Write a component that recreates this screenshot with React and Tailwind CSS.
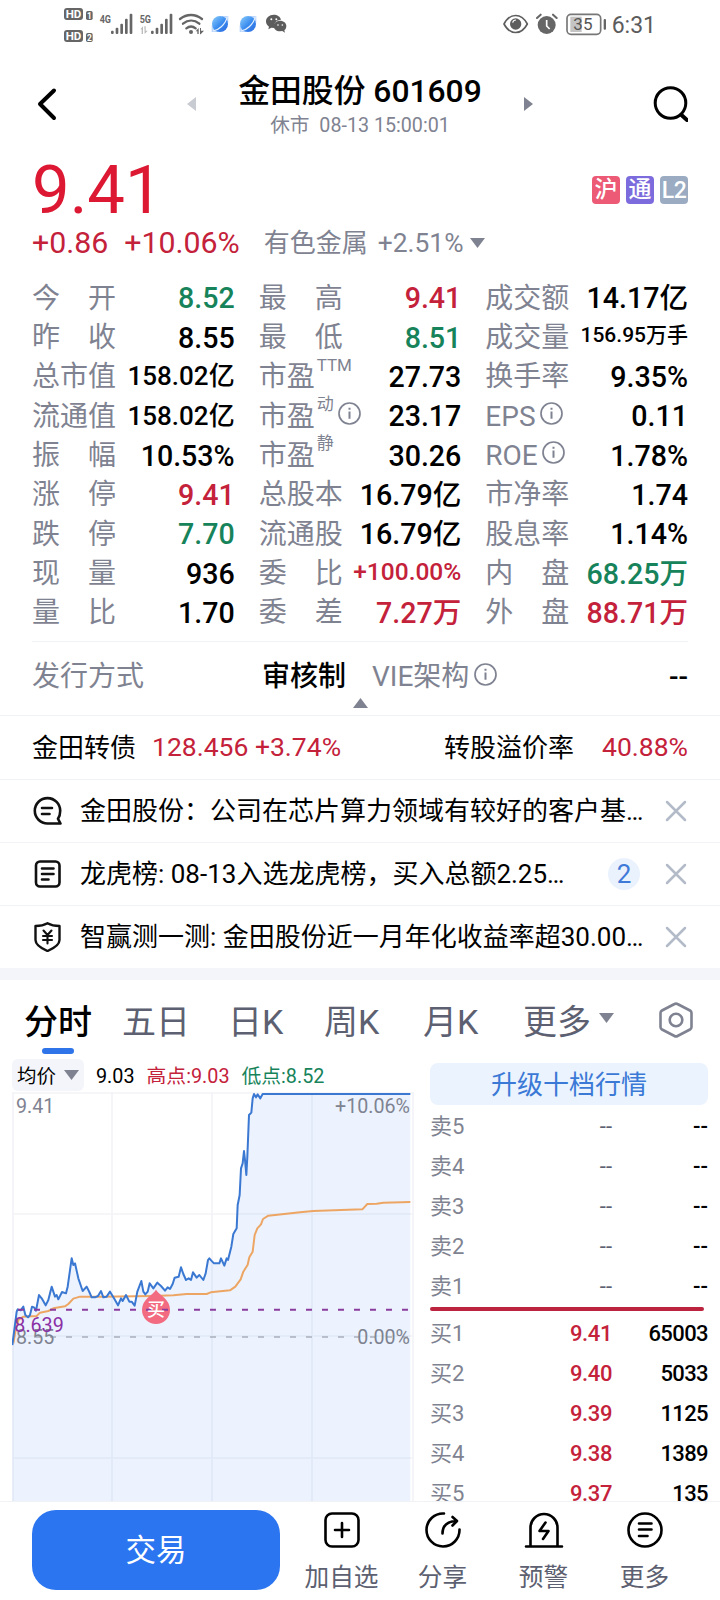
import React, { useState } from 'react';

const RED = 'text-[#c4213a]';
const GREEN = 'text-[#17835a]';

// STATS TABLE //
const STATS = [
  { label: '今开', value: '8.52', color: GREEN },
  { label: '最高', value: '9.41', color: RED },
  { label: '成交额', value: '14.17亿' },
  { label: '昨收', value: '8.55' },
  { label: '最低', value: '8.51', color: GREEN },
  { label: '成交量', value: '156.95万手', size: 'text-[21px] pb-1' },
  { label: '总市值', value: '158.02亿', size: 'text-[26px] pb-0.5' },
  { label: '市盈', sup: 'TTM', value: '27.73' },
  { label: '换手率', value: '9.35%' },
  { label: '流通值', value: '158.02亿', size: 'text-[26px] pb-0.5' },
  { label: '市盈', sup: '动', info: true, value: '23.17' },
  { label: 'EPS', info: true, value: '0.11' },
  { label: '振幅', value: '10.53%' },
  { label: '市盈', sup: '静', value: '30.26' },
  { label: 'ROE', info: true, value: '1.78%' },
  { label: '涨停', value: '9.41', color: RED },
  { label: '总股本', value: '16.79亿' },
  { label: '市净率', value: '1.74' },
  { label: '跌停', value: '7.70', color: GREEN },
  { label: '流通股', value: '16.79亿' },
  { label: '股息率', value: '1.14%' },
  { label: '现量', value: '936' },
  { label: '委比', value: '+100.00%', color: RED, size: 'text-[24.5px] pb-1' },
  { label: '内盘', value: '68.25万', color: GREEN },
  { label: '量比', value: '1.70' },
  { label: '委差', value: '7.27万', color: RED },
  { label: '外盘', value: '88.71万', color: RED },
];

// ORDER BOOK //
const ASKS = ['卖5', '卖4', '卖3', '卖2', '卖1'];
const BIDS = [
  { label: '买1', price: '9.41', volume: '65003' },
  { label: '买2', price: '9.40', volume: '5033' },
  { label: '买3', price: '9.39', volume: '1125' },
  { label: '买4', price: '9.38', volume: '1389' },
  { label: '买5', price: '9.37', volume: '135' },
];

// CHART LINES //
const PRICE_LINE =
  '37,375 50,275 53,268 62,271 70,260 76,285 84,292 90,285 96,260 102,262 108,272 117,225 125,235 137,256 145,240 155,200 165,230 170,225 175,238 186,216 198,220 203,200 215,115 220,135 225,130 235,175 248,213 260,200 268,216 275,232 285,232 294,228 303,213 310,232 320,230 330,215 342,235 354,256 363,235 368,243 378,225 388,245 395,245 404,257 412,215 424,183 430,215 436,223 443,215 449,190 460,205 472,188 483,198 495,212 503,202 510,207 518,192 524,173 536,170 543,142 550,162 558,180 566,175 573,180 579,157 590,173 598,165 610,180 617,160 624,120 628,115 634,122 642,130 658,130 663,115 673,137 680,115 684,120 694,80 700,42 710,25 713,-45 719,-75 723,-155 728,-170 732,-207 735,-180 739,-135 742,-190 747,-315 754,-322 758,-365 762,-378 768,-368 773,-377 781,-365 788,-378 1231,-378';
const AVG_LINE =
  '40,370 47,330 55,300 70,290 110,288 120,278 145,273 160,265 195,259 205,252 220,236 240,230 300,230 460,228 520,226 560,222 620,222 632,217 690,211 706,200 722,178 730,155 743,134 748,112 758,95 764,45 772,25 783,13 789,-3 805,-13 900,-23 940,-27 1087,-32 1102,-48 1130,-49 1150,-52 1231,-54';

function Info({ className = '' }) {
  return (
    <svg className={`h-[23px] w-[23px] shrink-0 ${className}`} viewBox="0 0 23 23" fill="none" stroke="#7f8391" strokeWidth="1.7">
      <circle cx="11.5" cy="11.5" r="10.5" />
      <path d="M11.5 9.6v7.2M11.5 5.8v2" strokeWidth="2" />
    </svg>
  );
}

function Signal({ label, arrows }) {
  return (
    <svg className="h-10 w-10" viewBox="144 15 120 120" fill="#666">
      <text x="149" y="68" fontSize="34" fontWeight="700" textLength="34" lengthAdjust="spacingAndGlyphs">{label}</text>
      {arrows && <path d="M151 88l8-9v23h-4v-14zM163 79h4v13h6l-9 10z" fill="#bbb" />}
      <rect x="183" y="92" width="8" height="10" rx="3" />
      <rect x="197" y="83" width="8" height="19" rx="3" />
      <rect x="211" y="71" width="8" height="31" rx="3" />
      <rect x="225" y="56" width="8" height="46" rx="3" />
      <rect x="239" y="41" width="8" height="61" rx="3" />
    </svg>
  );
}

function Globe() {
  return (
    <svg className="h-10 w-7" viewBox="477 15 84 120">
      <defs>
        <linearGradient id="globe" x1="0" y1="0" x2="1" y2="1">
          <stop offset="0" stopColor="#8fd0fb" />
          <stop offset="0.5" stopColor="#3d8ef0" />
          <stop offset="1" stopColor="#2a68e0" />
        </linearGradient>
      </defs>
      <path d="M514 48h21v20zM485 75v21h22z" fill="#bcd6fb" />
      <circle cx="510" cy="72" r="24" fill="url(#globe)" />
      <path d="M489 93c16-2 38-20 43-43" fill="none" stroke="#e4f1fe" strokeWidth="3.5" />
    </svg>
  );
}

function StatusBar() {
  return (
    <div className="flex h-[48px] items-start pt-[5px]">
      <div className="flex pl-16">
        <svg className="h-10 w-[34px]" viewBox="42 15 102 120">
          {[['1', 0], ['2', 66]].map(([n, dy]) => (
            <g key={n} transform={`translate(0 ${dy})`}>
              <rect x="42" y="24" width="57" height="36" rx="9" fill="#666" />
              <text x="47" y="54" fontSize="35" fontWeight="700" fill="#fff" textLength="47" lengthAdjust="spacingAndGlyphs">HD</text>
              <rect x="108" y="33" width="20" height="27" rx="5" fill="#666" />
              <text x="111" y="56" fontSize="25" fontWeight="700" fill="#fff">{n}</text>
            </g>
          ))}
        </svg>
        <Signal label="4G" />
        <Signal label="5G" arrows />
        {/* wifi */}
        <svg className="h-10 w-[31px]" viewBox="384 15 93 120" fill="none" stroke="#666" strokeWidth="7" strokeLinecap="round">
          <path d="M390 57c20-16 46-16 66 0M399 71c15-12 34-12 49 0M409 85c9-7 19-7 28 0" />
          <circle cx="423" cy="96" r="6" fill="#666" stroke="none" />
          <path d="M437 94l9-10v18h-4v-8zM450 84h3v8h9l-10 11h-2z" fill="#666" stroke="none" />
        </svg>
        <Globe />
        <Globe />
        {/* wechat */}
        <svg className="h-10 w-[25px]" viewBox="645 15 75 120" fill="#5c5c5c">
          <path d="M671 44c-13 0-23 9-23 20 0 7 3 12 9 16l-2 8 9-5 9 1c-4-14 6-25 20-25-2-9-11-15-22-15z" />
          <path d="M690 62c-11 0-19 7-19 16s8 16 19 16l7-1 8 5-2-7c4-3 6-8 6-13 0-9-8-16-19-16z" />
          <g fill="#fff">
            <circle cx="664" cy="58" r="3" />
            <circle cx="679" cy="58" r="3" />
            <circle cx="684" cy="75" r="2.5" />
            <circle cx="697" cy="75" r="2.5" />
          </g>
        </svg>
      </div>
      <div className="ml-auto flex items-start pr-[64px]">
        {/* eye */}
        <svg className="h-10 w-[33px]" viewBox="68 15 99 120" fill="none" stroke="#5e5e5e">
          <path d="M71 72c18-34 52-34 70 0-18 34-52 34-70 0z" strokeWidth="5" strokeLinejoin="round" />
          <circle cx="106" cy="72" r="17" fill="#5e5e5e" stroke="none" />
          <path d="M97 68a10 10 0 0 1 10-8" stroke="#fff" strokeWidth="3.5" />
        </svg>
        {/* alarm */}
        <svg className="h-10 w-[30px]" viewBox="167 15 90 120" fill="#666">
          <circle cx="199" cy="75" r="27" />
          <path d="M199 60v18l9 9" fill="none" stroke="#fff" strokeWidth="5" />
          <path d="M170 54l11-10M218 44l11 10" stroke="#666" strokeWidth="6" strokeLinecap="round" />
        </svg>
        {/* battery */}
        <svg className="h-10 w-[46px]" viewBox="257 15 138 120">
          <rect x="270" y="50" width="34" height="46" fill="#c4c4c4" />
          <rect x="260" y="43" width="101" height="60" rx="12" fill="none" stroke="#777" strokeWidth="5" />
          <rect x="370" y="57" width="7" height="32" rx="3" fill="#666" />
          <text x="279" y="91" fontSize="51" fill="#555">35</text>
        </svg>
        <span className="mt-[9px] text-[23px] leading-[24px] text-[#5c5c5c]">6:31</span>
      </div>
    </div>
  );
}

function Header() {
  return (
    <div className="flex h-[111px] items-center justify-between px-8">
      <svg className="h-9 w-9" viewBox="0 0 36 36" fill="none" stroke="#000" strokeWidth="4" strokeLinecap="round" strokeLinejoin="round">
        <path d="M22 4.500L8 18l14 14" />
      </svg>
      <div className="flex w-[346px] items-center justify-between">
        <svg className="h-[14px] w-[9px]" viewBox="0 0 9 14"><path d="M9 0v14L0 7z" fill="#c9cbd3" /></svg>
        <div className="flex flex-col items-center pt-1">
          <h1 className="text-[31.8px] font-medium leading-[40px] text-black">金田股份 601609</h1>
          <p className="pt-px text-[19.7px] leading-[28px] text-[#7f8391]">休市&nbsp; 08-13 15:00:01</p>
        </div>
        <svg className="h-[14px] w-[9px]" viewBox="0 0 9 14"><path d="M0 0v14l9-7z" fill="#7f8391" /></svg>
      </div>
      <svg className="h-9 w-9" viewBox="0 0 36 36" fill="none" stroke="#000" strokeWidth="3">
        <circle cx="18.500" cy="17" r="15.300" />
        <path d="M30 29.500l5 4.500" strokeWidth="4" strokeLinecap="round" />
      </svg>
    </div>
  );
}

function PriceSummary() {
  return (
    <div className="px-8">
      <div className="flex h-[59px] items-center justify-between">
        <span className="pt-[3px] text-[67px] leading-[56px] text-[#dc1833]">9.41</span>
        <div className="flex gap-1.5 pt-[3px] text-[23px] font-medium leading-[28px] text-white">
          <span className="h-7 w-7 rounded bg-[#ec5a75] text-center">沪</span>
          <span className="h-7 w-7 rounded bg-[#7b6bdc] text-center">通</span>
          <span className="h-7 w-7 rounded bg-[#9aabc2] pt-px text-center tracking-tight">L2</span>
        </div>
      </div>
      <div className="flex h-[48px] items-center pt-0.5">
        <span className={`text-[30.3px] ${RED}`}>+0.86</span>
        <span className={`ml-4 text-[30.3px] ${RED}`}>+10.06%</span>
        <span className="ml-6 text-[26px] text-[#7f8391]">有色金属</span>
        <span className="ml-2.5 text-[26.4px] text-[#7f8391]">+2.51%</span>
        <svg className="ml-1.5 h-[10px] w-[15px]" viewBox="0 0 15 10"><path d="M0 0h15l-7.500 10z" fill="#7f8391" /></svg>
      </div>
    </div>
  );
}

function Stat({ item }) {
  const spread = item.label.length === 2 && !item.sup;
  return (
    <div className="flex h-full items-center justify-between whitespace-nowrap">
      <div className="flex h-full items-center text-[28px] text-[#7f8391]">
        {spread ? (
          <span className="flex w-[84px] justify-between">
            <span>{item.label[0]}</span>
            <span>{item.label[1]}</span>
          </span>
        ) : (
          <span>{item.label}</span>
        )}
        {item.sup && <span className="-mt-1.5 ml-0.5 self-start text-[17px] leading-[26px]">{item.sup}</span>}
        {item.info && <Info className="mb-1.5 ml-1" />}
      </div>
      <span className={`font-medium ${item.size || 'text-[28.6px]'} ${item.color || 'text-black'}`}>{item.value}</span>
    </div>
  );
}

function Notice({ icon, text, count }) {
  const [open, setOpen] = useState(true);
  if (!open) return null;

  return (
    <div className="flex h-[63px] items-center border-t border-[#f1f2f5] px-8">
      {icon}
      <span className="ml-[18px] flex-1 whitespace-nowrap text-[26px] text-black">{text}</span>
      {count && (
        <span className="mr-[25px] h-8 w-8 rounded-full bg-[#eaf2fe] text-center text-[26px] leading-8 text-[#3f7ad8]">{count}</span>
      )}
      <button onClick={() => setOpen(false)}>
        <svg className="mr-[1px] h-[22px] w-[22px]" viewBox="0 0 22 22" stroke="#b3bbc9" strokeWidth="2.500" strokeLinecap="round">
          <path d="M2 2l18 18M20 2L2 20" />
        </svg>
      </button>
    </div>
  );
}

function Chart() {
  return (
    <svg className="h-[409px] w-[402px]" viewBox="36 -384 1206 1227" fill="none">
      {/* grid */}
      <path d="M39-384V843M336-384V843M636-384V843M936-384V843M1239-384V843M36-381H1242M36-18H1242M36 348H1242M36 714H1242" stroke="#f3f4f8" strokeWidth="5" />
      <polygon points={`${PRICE_LINE} 1231,843 37,843`} fill="#2b75f0" fillOpacity="0.09" />
      <polyline points={AVG_LINE} stroke="#eda564" strokeWidth="6" strokeLinejoin="round" />
      <polyline points={PRICE_LINE} stroke="#3a78d2" strokeWidth="6" strokeLinejoin="round" />

      <path d="M54 351H1228" stroke="#a9aebc" strokeWidth="5" strokeDasharray="18 30" />

      {/* buy marker */}
      <path d="M468 209c12 18 42 28 42 61a42 42 0 0 1-84 0c0-33 30-43 42-61z" fill="#f26b81" />
      <path d="M54 269H1228" stroke="#8a3d9e" strokeWidth="6" strokeDasharray="18 30" />
      <text x="468" y="287" fontSize="54" fontWeight="500" fill="#fff" textAnchor="middle">买</text>

      <g fontSize="59" fill="#7f8391">
        <text x="48" y="-321">9.41</text>
        <text x="1230" y="-321" textAnchor="end">+10.06%</text>
        <text x="48" y="372">8.55</text>
        <text x="1230" y="372" textAnchor="end">0.00%</text>
        <text x="43" y="335" fill="#8a2fa5">8.639</text>
      </g>
    </svg>
  );
}

function OrderBook() {
  return (
    <div className="ml-[16px] w-[278px] pt-1">
      <button className="block h-[42px] w-full rounded-lg bg-[#ebf3fe] pt-[3px] text-[26px] leading-[39px] text-[#3a79d6]">升级十档行情</button>
      <div className="pt-[2px]">
        {ASKS.map((label) => (
          <div key={label} className="flex h-10 items-center text-[22px]">
            <span className="w-[60px] text-[#7f8391]">{label}</span>
            <span className="w-[122px] text-right text-[#5c6070]">--</span>
            <span className="flex-1 text-right font-medium text-black">--</span>
          </div>
        ))}
      </div>
      <div className="h-1 w-[274px] rounded-full bg-[#bb233e]" />
      <div className="pt-[3px]">
        {BIDS.map((row) => (
          <div key={row.label} className="flex h-10 items-center text-[22px]">
            <span className="w-[60px] text-[#7f8391]">{row.label}</span>
            <span className={`w-[122px] text-right text-[22px] font-medium tracking-[-0.4px] ${RED}`}>{row.price}</span>
            <span className="flex-1 text-right text-[22px] font-medium tracking-[-0.6px] text-black">{row.volume}</span>
          </div>
        ))}
      </div>
    </div>
  );
}

const TABS = [
  { name: '五日', width: 'w-[106px]' },
  { name: '日K', width: 'w-[96px]' },
  { name: '周K', width: 'w-[99px]' },
  { name: '月K', width: 'w-[100px]' },
];

const ACTIONS = [
  {
    name: '加自选',
    icon: (
      <>
        <rect x="1.500" y="1.500" width="33" height="33" rx="6.500" />
        <path d="M18 11v14M11 18h14" />
      </>
    ),
  },
  {
    name: '分享',
    icon: (
      <>
        <path d="M19 1.500A16.500 16.500 0 1 0 34.500 17.500" />
        <path d="M17.500 21.500c0-7 4-12 14-12.500M27.500 5l4.500 4-4.500 4.500" />
      </>
    ),
  },
  {
    name: '预警',
    icon: (
      <>
        <path d="M4.500 34V15.500a13.500 13.500 0 0 1 27 0V34M0 34.500h36" />
        <path d="M19.500 10.500l-6 8.500h9l-5.500 8" />
      </>
    ),
  },
  {
    name: '更多',
    icon: (
      <>
        <circle cx="18" cy="18" r="16.500" />
        <path d="M12 11.500h12.500M12 17.500h12.500M12 24h8.500" />
      </>
    ),
  },
];

export default function App() {
  return (
    <div className="flex h-[1600px] w-[720px] flex-col overflow-hidden bg-white font-['Roboto','Noto_Sans_CJK_SC',sans-serif] leading-none">
      <StatusBar />
      <Header />
      <PriceSummary />

      {/* Stats */}
      <div className="mx-8 mt-[13px] grid h-[354px] grid-cols-3 grid-rows-9 gap-x-6">
        {STATS.map((item) => (
          <Stat key={item.label + (item.sup || '')} item={item} />
        ))}
      </div>
      <div className="mx-8 mt-2 flex h-[74px] flex-col items-center border-t border-[#f1f2f5] pt-[14px]">
        <div className="flex h-[42px] w-full items-center text-[28px] text-[#7f8391]">
          <span className="w-[230px]">发行方式</span>
          <span className="font-medium text-black">审核制</span>
          <span className="ml-[26px]">VIE架构</span>
          <Info className="mb-1.5 ml-[5px]" />
          <span className="ml-auto font-medium text-black">--</span>
        </div>
        <svg className="h-[10px] w-[15px]" viewBox="0 0 15 10"><path d="M0 10h15L7.500 0z" fill="#7f8391" /></svg>
      </div>

      {/* Convertible bond */}
      <div className={`flex h-[64px] items-center border-t border-[#f1f2f5] px-8 text-[26px] ${RED}`}>
        <span className="text-black">金田转债</span>
        <span className="ml-4 text-[26.5px]">128.456 +3.74%</span>
        <span className="ml-auto text-black">转股溢价率</span>
        <span className="ml-7 text-[26.5px]">40.88%</span>
      </div>

      {/* Notices */}
      <Notice
        text="金田股份：公司在芯片算力领域有较好的客户基…"
        icon={
          <svg className="h-[30px] w-[30px]" viewBox="0 0 30 30" fill="none" stroke="#111" strokeWidth="2.600" strokeLinecap="round" strokeLinejoin="round">
            <path d="M28.500 27.500H15.500A12.700 12.700 0 1 1 28.200 15c0 3.500-.9 5.800-2.200 7.800z" />
            <path d="M10 12h10M10 18h7.500" />
          </svg>
        }
      />
      <Notice
        text="龙虎榜: 08-13入选龙虎榜，买入总额2.25…"
        count="2"
        icon={
          <svg className="h-[30px] w-[30px]" viewBox="0 0 30 30" fill="none" stroke="#111" strokeWidth="2.600" strokeLinecap="round">
            <rect x="4" y="2.500" width="23.500" height="25" rx="4" />
            <path d="M10 9.500h11.500M10 15h11.500M10 20.500h6.500" />
          </svg>
        }
      />
      <Notice
        text="智赢测一测: 金田股份近一月年化收益率超30.00…"
        icon={
          <svg className="h-[30px] w-[30px]" viewBox="0 0 30 30" fill="none" stroke="#111" strokeWidth="2.400" strokeLinecap="round" strokeLinejoin="round">
            <path d="M15.500 1.200c3.500 2 7.500 2.800 12 2.800V18c0 4.500-5 8-12 11-7-3-12-6.500-12-11V4c4.500 0 8.500-.8 12-2.800z" />
            <path d="M11.500 8.500l4 4.500 4-4.500M15.500 13v8.500M11 14h9M11 18h9" strokeWidth="2.100" />
          </svg>
        }
      />
      <div className="h-3 shrink-0 bg-[#f4f5fa]" />

      {/* Period tabs */}
      <div className="flex h-[79px] shrink-0 items-center pl-6 text-[34px] text-[#5c6070]">
        <div className="relative w-[98px] pt-1 font-medium text-black">
          分时
          <span className="absolute -bottom-[15px] left-[18px] h-1.5 w-8 rounded-full bg-[#2f74e8]" />
        </div>
        {TABS.map((tab) => (
          <span key={tab.name} className={`pt-1 ${tab.width}`}>{tab.name}</span>
        ))}
        <span className="pt-1">更多</span>
        <svg className="mb-1 ml-2 h-[10px] w-[15px]" viewBox="0 0 15 10"><path d="M0 0h15l-7.500 10z" fill="#7f8391" /></svg>
        <svg className="ml-auto mr-[26px] h-9 w-9" viewBox="0 0 36 36" fill="none" stroke="#7f8391" strokeWidth="2.600" strokeLinejoin="round">
          <path d="M16.500 2a3 3 0 0 1 3 0l12.500 6.500a3 3 0 0 1 1.500 2.600v13.800a3 3 0 0 1-1.500 2.600l-12.500 6.500a3 3 0 0 1-3 0L4 27.500a3 3 0 0 1-1.500-2.600V11.100A3 3 0 0 1 4 8.500z" />
          <circle cx="18" cy="18" r="6.300" />
        </svg>
      </div>

      {/* Chart and order book */}
      <div className="flex h-[442px] shrink-0 overflow-hidden pl-3">
        <div className="w-[402px]">
          <div className="flex h-[33px] items-center pb-px text-[19.8px]">
            <span className="flex h-8 w-[72px] items-center justify-between rounded-md bg-[#f4f5fa] px-[5px] text-black">
              <span className="pt-1 text-[19.500px]">均价</span>
              <svg className="h-[10px] w-[15px]" viewBox="0 0 15 10"><path d="M0 0h15l-7.500 10z" fill="#7f8391" /></svg>
            </span>
            <span className="ml-3 pt-1 text-black">9.03</span>
            <span className={`ml-3 pt-1 ${RED}`}>高点:9.03</span>
            <span className={`ml-3 pt-1 ${GREEN}`}>低点:8.52</span>
          </div>
          <Chart />
        </div>
        <OrderBook />
      </div>

      {/* Bottom bar */}
      <div className="flex h-[99px] shrink-0 border-t border-[#f1f2f5] bg-white pl-8 pt-2">
        <button className="h-20 w-[248px] rounded-3xl bg-[#2b75f0] pt-[3px] text-[30.500px] text-white">交易</button>
        <div className="ml-[11px] flex">
          {ACTIONS.map((action) => (
            <button key={action.name} className="flex w-[101px] flex-col items-center pt-[2px]">
              <svg className="h-9 w-9 overflow-visible" viewBox="0 0 36 36" fill="none" stroke="#000" strokeWidth="2.600" strokeLinecap="round" strokeLinejoin="round">
                {action.icon}
              </svg>
              <span className="mt-[13px] text-[24.700px] leading-[34px] text-[#5c6070]">{action.name}</span>
            </button>
          ))}
        </div>
      </div>
    </div>
  );
}
